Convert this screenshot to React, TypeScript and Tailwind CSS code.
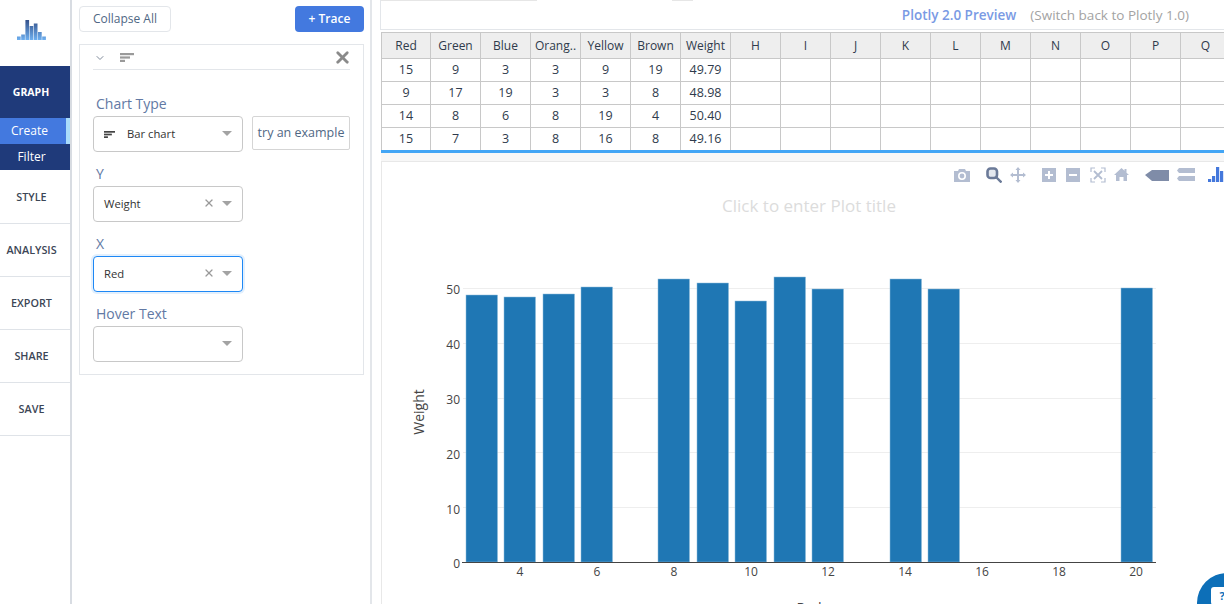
import { ChevronDown, X } from 'lucide-react';

const FONT = 'font-["Open_Sans","Noto_Sans",sans-serif]';

const headers = ['Red', 'Green', 'Blue', 'Orang..', 'Yellow', 'Brown', 'Weight', 'H', 'I', 'J', 'K', 'L', 'M', 'N', 'O', 'P', 'Q'];
const rows = [
  ['15', '9', '3', '3', '9', '19', '49.79'],
  ['9', '17', '19', '3', '3', '8', '48.98'],
  ['14', '8', '6', '8', '19', '4', '50.40'],
  ['15', '7', '3', '8', '16', '8', '49.16'],
];

// [x, top] of each bar, taken from the plot
const bars = [
  [466, 295], [504, 297], [543, 294], [581, 287], [658, 279], [697, 283],
  [735, 301], [774, 277], [812, 289], [890, 279], [928, 289], [1121, 288],
];

// [x, top] of the logo bars
const logoBars = [
  [0, 16.5], [4.2, 14.5], [8.4, 0], [12.6, 6], [16.8, 3.5], [21, 12], [25.2, 16.5],
];

function NavItem({ label }: { label: string }) {
  return (
    <div className="h-[53px] flex items-center justify-center border-b border-[#dfe3e8] text-[10.8px] font-semibold text-[#3c4656] pr-[7px]">
      {label}
    </div>
  );
}

function BarIcon({ color, width, height }: { color: string; width: number; height: number }) {
  return (
    <svg width={width} height={height} viewBox="0 0 14 9" preserveAspectRatio="none" fill={color}>
      <rect x="0" y="0" width="14" height="2.2" />
      <rect x="0" y="3.4" width="10" height="2.2" />
      <rect x="0" y="6.8" width="5" height="2.2" />
    </svg>
  );
}

function Caret() {
  return <div className="w-0 h-0 -mt-[1px] border-x-[5px] border-x-transparent border-t-[5px] border-t-[#a3a3a3]" />;
}

function Dropdown({ value, clear, focused }: { value?: string; clear?: boolean; focused?: boolean }) {
  return (
    <div
      className={`w-[150px] h-[36px] rounded-[4px] bg-white flex items-center pl-[10px] pr-[10px] text-[11.25px] border ${
        focused ? 'border-[#1e88f5] shadow-[0_0_0_2px_#e3f0fd]' : 'border-[#c8c8c8]'
      }`}
    >
      <span className="flex-1 text-[#333]">{value}</span>
      {clear && <X size={12} strokeWidth={2.5} className="text-[#999] mr-[7px] -mt-[3px]" />}
      <Caret />
    </div>
  );
}

function Label({ children }: { children: string }) {
  return <div className="text-[14px] leading-[20px] text-[#6279a4] mb-[2px] pl-[3px]">{children}</div>;
}

function ToolIcon({ children, width = 16 }: { children: React.ReactNode; width?: number }) {
  return (
    <svg width={width} height="16" viewBox={`0 0 ${width} 16`} className="shrink-0">
      {children}
    </svg>
  );
}

function Toolbar() {
  const c = '#b3bdd1';
  return (
    <div className="flex items-center h-[16px]">
      <ToolIcon>
        <path fill={c} d="M0 4h4l1-2h6l1 2h4v11H0z" />
        <circle cx="8" cy="9" r="3.2" fill="none" stroke="#fff" strokeWidth="1.6" />
      </ToolIcon>
      <div className="w-[16px] shrink-0" />
      <ToolIcon>
        <rect x="1.5" y="1.5" width="9.500" height="9.500" rx="3" fill="#e4e8ef" stroke="#6b7a98" strokeWidth="2.6" />
        <path d="M10 10l5.500 5.500" stroke="#6b7a98" strokeWidth="2.400" />
      </ToolIcon>
      <div className="w-[8px] shrink-0" />
      <ToolIcon>
        <path fill={c} d="M8 0l2.500 3H9v4h4V5.500l3 2.500-3 2.500V9H9v4h1.500L8 16l-2.500-3H7V9H3v1.500L0 8l3-2.500V7h4V3H5.500z" />
      </ToolIcon>
      <div className="w-[16px] shrink-0" />
      <ToolIcon width={15}>
        <rect x="0" y="1" width="14" height="14" fill={c} />
        <path d="M3 8h8M7 4v8" stroke="#fff" strokeWidth="2" />
      </ToolIcon>
      <div className="w-[9px] shrink-0" />
      <ToolIcon width={15}>
        <rect x="0" y="1" width="14" height="14" fill={c} />
        <path d="M3 8h8" stroke="#fff" strokeWidth="2" />
      </ToolIcon>
      <div className="w-[9px] shrink-0" />
      <ToolIcon>
        <path d="M1 5V1h4M11 1h4v4M15 11v4h-4M5 15H1v-4" fill="none" stroke={c} strokeWidth="1.200" />
        <path d="M4 4l8 8M12 4l-8 8" stroke={c} strokeWidth="1.800" />
      </ToolIcon>
      <div className="w-[8px] shrink-0" />
      <ToolIcon width={15}>
        <path fill={c} d="M7.500 1l3 2.800V2h2v3.700L15 8h-2v6H9.500v-4h-4v4H2V8H0z" />
      </ToolIcon>
      <div className="w-[16px] shrink-0" />
      <ToolIcon width={24}>
        <path fill="#7f8ca8" d="M0 8l7-5h17v11H7z" />
      </ToolIcon>
      <div className="w-[8px] shrink-0" />
      <ToolIcon width={18}>
        <path fill={c} d="M2 1h16v5H2L0 3.500zM2 9h16v5H2l-2-2.500z" />
      </ToolIcon>
      <div className="w-[13px] shrink-0" />
      <ToolIcon width={20}>
        <rect x="0" y="12" width="3.200" height="3" fill="#4478dc" />
        <rect x="4" y="9" width="3.200" height="6" fill="#4478dc" />
        <rect x="8" y="0" width="3.200" height="15" fill="#4478dc" />
        <rect x="12" y="4" width="3.200" height="11" fill="#4478dc" />
        <rect x="16" y="2" width="3.200" height="13" fill="#4478dc" />
      </ToolIcon>
    </div>
  );
}

export default function App() {
  return (
    <div className={`w-[1224px] h-[604px] overflow-hidden flex bg-white ${FONT}`}>
      {/* left nav */}
      <div className="w-[72px] shrink-0 border-r-2 border-[#d8dce2] flex flex-col">
        <div className="h-[66px] flex items-start pl-[17px] pt-[20px]">
          <svg width="29" height="20" viewBox="0 0 29 20">
            <defs>
              <linearGradient id="logoFill" x1="0" y1="0" x2="0" y2="20" gradientUnits="userSpaceOnUse">
                <stop offset="0" stopColor="#34518a" />
                <stop offset="1" stopColor="#6fb0f0" />
              </linearGradient>
            </defs>
            {logoBars.map(([x, top]) => (
              <rect key={x} x={x} y={top} width="3.700" height={20 - top} fill="url(#logoFill)" />
            ))}
          </svg>
        </div>
        <div className="bg-[#1f3a7a] text-white">
          <div className="h-[52px] flex items-center justify-center text-[10.5px] font-bold pr-[8px] pt-[1px]">GRAPH</div>
          <div className="h-[26px] flex items-center justify-center text-[12px] bg-[#4379df] border-r-[4px] border-[#a9dcfb] pr-[7px]">Create</div>
          <div className="h-[26px] flex items-center justify-center text-[12px] pr-[7px]">Filter</div>
        </div>
        <div className="mt-[1px]">
          <NavItem label="STYLE" />
          <NavItem label="ANALYSIS" />
          <NavItem label="EXPORT" />
          <NavItem label="SHARE" />
          <NavItem label="SAVE" />
        </div>
      </div>

      {/* trace panel */}
      <div className="w-[300px] shrink-0 border-r-2 border-[#e3e6ea] pl-[7px] pr-[6px] pt-[6px]">
        <div className="flex items-center justify-between h-[26px]">
          <div className="h-[26px] w-[92px] rounded-[4px] border border-[#e3e6ea] flex items-center justify-center text-[12px] text-[#506784]">
            Collapse All
          </div>
          <div className="h-[26px] w-[69px] rounded-[4px] bg-[#4379df] flex items-center justify-center text-[12px] font-semibold text-white">
            + Trace
          </div>
        </div>
        <div className="mt-[12px] h-[331px] border border-[#e3e6ea] px-[13px]">
          <div className="h-[25px] flex items-center border-b border-[#e3e6ea]">
            <ChevronDown size={12} className="text-[#7f8a9a] ml-[1px] mt-[2px]" />
            <div className="ml-[14px] flex">
              <BarIcon color="#9a9a9a" width={14} height={9} />
            </div>
            <X size={19} strokeWidth={3.500} className="ml-auto -mr-[2px] text-[#8a8a8a]" />
          </div>
          <div className="mt-[24px] w-full">
            <Label>Chart Type</Label>
            <div className="flex items-start">
              <div className="w-[150px] h-[36px] rounded-[4px] border border-[#c8c8c8] flex items-center pl-[10px] pr-[10px] text-[11.25px] text-[#333]">
                <BarIcon color="#444" width={11} height={7} />
                <span className="ml-[12px] flex-1">Bar chart</span>
                <Caret />
              </div>
              <div className="ml-[9px] w-[98px] h-[34px] border border-[#d5d5d5] rounded-[2px] flex items-center justify-center text-[12.500px] text-[#506784] whitespace-nowrap">
                try an example
              </div>
            </div>
          </div>
          <div className="mt-[12px]">
            <Label>Y</Label>
            <Dropdown value="Weight" clear />
          </div>
          <div className="mt-[12px]">
            <Label>X</Label>
            <Dropdown value="Red" clear focused />
          </div>
          <div className="mt-[12px]">
            <Label>Hover Text</Label>
            <Dropdown />
          </div>
        </div>
      </div>

      {/* main */}
      <div className="flex-1 min-w-0 overflow-hidden bg-white relative">
        {/* bottoms of the tabs that are scrolled away */}
        <div className="absolute left-[9px] top-0 w-[156px] h-[1px] bg-[#e6e6e6]" />
        <div className="absolute left-[300px] top-0 w-[21px] h-[1px] bg-[#e6e6e6]" />
        <div className="h-[30px] ml-[8px] pt-[1px] border-b border-l border-[#e3e6ea] flex items-center justify-end pr-[35px] text-[13.500px]">
          <span className="font-semibold text-[#7a9ae4]">Plotly 2.0 Preview</span>
          <span className="ml-[14px] text-[#a3a3a3]">(Switch back to Plotly 1.0)</span>
        </div>
        <div className="ml-[9px] mt-[2px] w-[900px]">
          <div className="flex h-[27px] bg-[#eeeeee] border-y border-[#c8c8c8] border-l border-l-[#c8c8c8]">
            {headers.map((h, j) => (
              <div
                key={h}
                className={`${j === 0 ? 'w-[49px]' : 'w-[50px]'} shrink-0 border-r border-[#c8c8c8] flex items-center justify-center pt-[1px] text-[12px] text-[#2f3b4c] whitespace-nowrap`}
              >
                {h}
              </div>
            ))}
          </div>
          {rows.map((row, i) => (
            <div key={i} className="flex h-[23px] border-b border-[#c8c8c8] border-l border-l-[#c8c8c8]">
              {headers.map((_, j) => (
                <div
                  key={j}
                  className={`${j === 0 ? 'w-[49px]' : 'w-[50px]'} shrink-0 border-r border-[#c8c8c8] flex items-center justify-center text-[12.500px] text-[#2f3b4c]`}
                >
                  {row[j]}
                </div>
              ))}
            </div>
          ))}
        </div>
        <div className="ml-[9px] h-[3px] bg-[#42a5f5] -mt-[1px]" />
        <div className="ml-[9px] h-[8px] bg-[#f7f7f7]" />
        <div className="ml-[9px] h-[500px] border-t border-l border-[#e8e8e8] relative">
          <div className="flex justify-start pl-[572px] pt-[5px] overflow-hidden">
            <Toolbar />
          </div>
          <svg
            width="843"
            height="443"
            viewBox="381 161 843 443"
            className="absolute -left-px -top-px pointer-events-none"
            fontFamily="'Open Sans', 'Noto Sans', sans-serif"
          >
            <text x="809" y="212" textAnchor="middle" fontSize="17" fill="#dcdcdc">Click to enter Plot title</text>
            {[288.5, 343.5, 398.5, 452.5, 507.5].map((y) => (
              <line key={y} x1="463" x2="1156" y1={y} y2={y} stroke="#eeeeee" />
            ))}
            {bars.map(([x, top]) => (
              <rect key={x} x={x} y={top} width="31.500" height={562 - top} fill="#1f77b4" stroke="#8dbbda" strokeWidth="0.500" />
            ))}
            <line x1="462" x2="1156" y1="562.500" y2="562.500" stroke="#444" strokeWidth="1.200" />
            {[[0, 568], [10, 514], [20, 459], [30, 404], [40, 349], [50, 293.500]].map(([v, y]) => (
              <text key={v} x="460" y={y} textAnchor="end" fontSize="12" fill="#444">{v}</text>
            ))}
            {[4, 6, 8, 10, 12, 14, 16, 18, 20].map((v) => (
              <text key={v} x={520 + (v - 4) * 38.500} y="576" textAnchor="middle" fontSize="12" fill="#444">{v}</text>
            ))}
            <text transform="translate(424,412) rotate(-90)" textAnchor="middle" fontSize="14" fill="#444">Weight</text>
            <text x="809" y="613" textAnchor="middle" fontSize="14" fill="#444">Red</text>
          </svg>
        </div>
        <div className="absolute left-[825px] top-[573px] w-[60px] h-[60px] rounded-full bg-[#0d6fb8] flex items-start justify-start pl-[14px] pt-[14px]">
          <div className="w-[22px] h-[18px] shrink-0 rounded-[3px] bg-white text-[11px] font-bold text-[#0d6fb8] flex items-center justify-center">?</div>
        </div>
      </div>
    </div>
  );
}
